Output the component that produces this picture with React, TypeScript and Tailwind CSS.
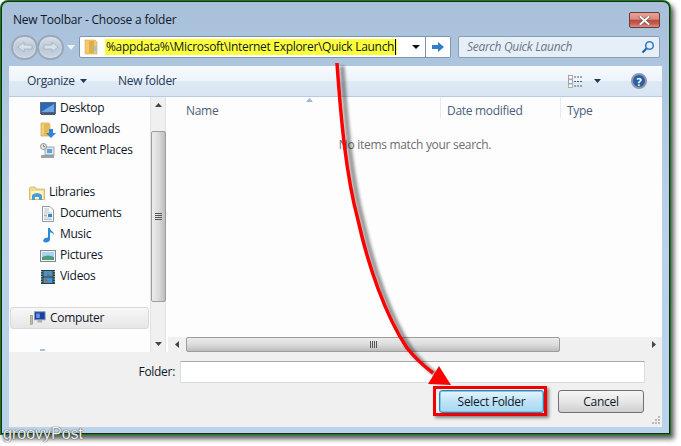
import React from "react";

const F = { fontFamily: '"Open Sans","Noto Sans",sans-serif' };

function NavIcon({ kind }: { kind: string }) {
  const c = "w-[16px] h-[16px] shrink-0";
  switch (kind) {
    case "desktop":
      return (
        <svg className={c} viewBox="0 0 16 16">
          <rect x="0.5" y="1.5" width="15" height="11" fill="#2d66b8" stroke="#5b6b80" />
          <path d="M1 11L14 3V11Z" fill="#6fa5e0" />
          <rect x="1" y="12" width="14" height="2" fill="#555" />
          <rect x="2" y="12" width="2" height="1" fill="#d33" />
        </svg>
      );
    case "downloads":
      return (
        <svg className={c} viewBox="0 0 16 16">
          <path d="M1 1H9L10 3V14H1Z" fill="#f0cf78" stroke="#c9a24f" strokeWidth=".7" />
          <path d="M4 2H9V14H4Z" fill="#e4b94f" />
          <path d="M9 7H13V11H16L11 16L6 11H9Z" fill="#2f86d8" />
        </svg>
      );
    case "recent":
      return (
        <svg className={c} viewBox="0 0 16 16">
          <rect x="1" y="12" width="13" height="3" fill="#9aa3a8" />
          <rect x="5" y="4" width="9" height="8" fill="#dfe7ee" stroke="#8b949c" strokeWidth=".8" />
          <rect x="7" y="6" width="5" height="4" fill="#5ca2dc" />
          <circle cx="3.5" cy="3.5" r="3" fill="#e8e8e8" stroke="#777" strokeWidth=".8" />
          <path d="M3.5 1.8V3.6H5" stroke="#555" strokeWidth=".7" fill="none" />
        </svg>
      );
    case "libraries":
      return (
        <svg className={c} viewBox="0 0 16 16">
          <path d="M0.5 3V14.5H15.5V4H7L6 2H1.5Z" fill="#f3dc8f" stroke="#c9a95a" strokeWidth=".7" />
          <path d="M2 6H14V14H2Z" fill="#fdf3c8" />
          <path d="M3 15V10Q8 6 13 10V15H10V12H6V15Z" fill="#4a9ed8" />
        </svg>
      );
    case "documents":
      return (
        <svg className={c} viewBox="0 0 16 16">
          <path d="M2.5 .5H10L13.5 4V15.5H2.5Z" fill="#fbfdff" stroke="#8d99a6" />
          <path d="M4 3H9M4 5H9M4 7H12M4 12H12M4 13.5H12" stroke="#9aa5b0" strokeWidth=".7" />
          <rect x="8" y="8" width="4" height="3" fill="#3e86c6" />
          <rect x="4" y="8.5" width="3" height="2" fill="#a9b6c2" />
        </svg>
      );
    case "music":
      return (
        <svg className={c} viewBox="0 0 16 16">
          <path d="M8 1H10C10 4 14 4 14 8C13 6 11 5.500 10 5.500V12.500C10 15 6 16 4 15C2 13.500 4 10.500 8 10.500Z" fill="#2b8ad6" />
        </svg>
      );
    case "pictures":
      return (
        <svg className={c} viewBox="0 0 16 16">
          <rect x=".5" y="2.500" width="15" height="11" fill="#eef2f5" stroke="#7d8a94" />
          <rect x="2" y="4" width="12" height="8" fill="#a9d4ee" />
          <path d="M2 9Q8 6 14 9V12H2Z" fill="#4f9a7d" />
        </svg>
      );
    case "videos":
      return (
        <svg className={c} viewBox="0 0 16 16">
          <rect x="1" y="1" width="14" height="14" fill="#2b3f3c" />
          <rect x="3.500" y="2" width="9" height="5.500" fill="#3f96d8" />
          <rect x="3.500" y="8.500" width="9" height="5.500" fill="#3f96d8" />
          <path d="M1.800 2V14M14.200 2V14" stroke="#cfe3dc" strokeWidth="1" strokeDasharray="1.200 1.300" />
          <path d="M7 3L11 7H7ZM5 9L9 13H5Z" fill="#a8623d" />
        </svg>
      );
    default:
      return (
        <svg className={c} viewBox="0 0 18 16">
          <rect x="0" y="5" width="3" height="10" fill="#b9bd9a" stroke="#777" strokeWidth=".5" />
          <rect x="5" y="1" width="12" height="9" fill="#1740a8" stroke="#8d98a3" />
          <path d="M7 3H11V8H7Z" fill="#6b94e0" />
          <path d="M9 10H13L14 13H8Z" fill="#a8b0b8" />
        </svg>
      );
  }
}

function Row({ kind, label, indent = true }: { kind: string; label: string; indent?: boolean }) {
  return (
    <div className={`h-[21px] flex items-center text-[12px] text-[#101828] ${indent ? "pl-[31px]" : "pl-[20px]"}`}>
      <NavIcon kind={kind} />
      <span className="ml-[4px] pb-px">{label}</span>
    </div>
  );
}

function Grip({ vertical }: { vertical?: boolean }) {
  return vertical ? (
    <div className="flex flex-col gap-px w-[7px]">
      <div className="h-px bg-[#555]" />
      <div className="h-px bg-[#555]" />
      <div className="h-px bg-[#555]" />
      <div className="h-px bg-[#555]" />
    </div>
  ) : (
    <div className="flex gap-px h-[7px]">
      <div className="w-px bg-[#555]" />
      <div className="w-px bg-[#555]" />
      <div className="w-px bg-[#555]" />
      <div className="w-px bg-[#555]" />
    </div>
  );
}

function Tri({ d, color = "#333", w = 8, h = 5 }: { d: string; color?: string; w?: number; h?: number }) {
  const pts =
    d === "down"
      ? `0,0 ${w},0 ${w / 2},${h}`
      : d === "up"
      ? `0,${h} ${w},${h} ${w / 2},0`
      : d === "left"
      ? `${w},0 ${w},${h} 0,${h / 2}`
      : `0,0 0,${h} ${w},${h / 2}`;
  return (
    <svg width={w} height={h} className="block shrink-0">
      <polygon points={pts} fill={color} />
    </svg>
  );
}

function RoundNav({ flip }: { flip?: boolean }) {
  return (
    <div className="w-[27px] h-[25px] rounded-full border-2 border-[#9aa8b8] bg-gradient-to-b from-[#d5dde7] via-[#bcc9d8] to-[#c9d4e1] flex items-center justify-center shadow-[inset_0_0_2px_#eef3f8]">
      <svg width="16" height="12" viewBox="0 0 16 12" className={flip ? "rotate-180" : ""}>
        <path d="M1 6L7 1V4H15V8H7V11Z" fill="#d8e0e9" stroke="#a3afbd" strokeWidth=".8" />
      </svg>
    </div>
  );
}

export default function App() {
  return (
    <div className="relative w-[681px] h-[446px] bg-white overflow-hidden tracking-[-0.3px]" style={F}>
      {/* window */}
      <div className="w-[671px] h-[435px] bg-[#0f7f16] rounded-t-[8px] p-px shadow-[3px_4px_5px_rgba(0,0,0,0.65)]">
        <div className="w-full h-full bg-[#1c2b1c] rounded-t-[7px] p-px">
          <div className="w-full h-full rounded-t-[6px] bg-gradient-to-b from-[#a9c0da] via-[#b9d0e8] to-[#bad3ec] px-[7px] pb-[6px] flex flex-col">
            {/* title bar */}
            <div className="h-[28px] flex items-end shrink-0 relative">
              <span className="text-[12px] leading-[16px] text-[#101828] ml-[4px] mb-[2px] tracking-[-0.2px]">New Toolbar - Choose a folder</span>
              <div className="ml-auto mr-[2px] mb-[2px] w-[31px] h-[16px] rounded-[2px] border border-[#6b3a3a] bg-[linear-gradient(#e6a396,#d98b7e_45%,#b8483d_50%,#c55c50_75%,#dd9085)] flex items-center justify-center">
                <svg width="13" height="9" viewBox="0 0 13 9">
                  <path d="M2.500 1L10.500 8M10.500 1L2.500 8" stroke="#6b4a48" strokeWidth="3" strokeLinecap="square" />
                  <path d="M2.500 1L10.500 8M10.500 1L2.500 8" stroke="#fff" strokeWidth="2" strokeLinecap="square" />
                </svg>
              </div>
            </div>
            {/* nav row */}
            <div className="h-[34px] flex items-center shrink-0">
              <div className="flex -space-x-[1px] ml-[2px]">
                <RoundNav />
                <RoundNav flip />
              </div>
              <div className="ml-[3px]">
                <Tri d="down" color="#eef3f8" w={8} h={5} />
              </div>
              <div className="ml-[4px] w-[372px] h-[22px] bg-white border border-[#7d95ae] rounded-[2px] flex items-center shrink-0">
                <svg width="14" height="16" viewBox="0 0 14 16" className="ml-[4px] shrink-0">
                  <path d="M1 1H11L13 3V15H1Z" fill="#efcb6d" stroke="#d2ad56" strokeWidth=".6" />
                  <path d="M5 2H10V14H5Z" fill="#dfb04a" />
                  <rect x="10" y="7" width="3" height="5" fill="#9cc5e8" />
                </svg>
                <div className="ml-[7px] bg-[#ffff3c] h-[16px] flex items-center text-[12px] leading-[16px] text-[#101828] whitespace-nowrap w-[292px] shrink-0 pl-px">
                  <span className="border-r border-black pr-px">%appdata%\Microsoft\Internet Explorer\Quick Launch</span>
                </div>
                <div className="ml-auto mr-[5px]">
                  <Tri d="down" color="#111" w={8} h={4} />
                </div>
                <div className="w-[25px] h-full bg-white border-l border-[#7d95ae] flex items-center justify-center shrink-0">
                  <svg width="14" height="12" viewBox="0 0 14 12">
                    <path d="M1 4H7V1L13 6L7 11V8H1Z" fill="#2f7fc8" />
                  </svg>
                </div>
              </div>
              <div className="ml-[7px] flex-1 mr-[2px] h-[22px] bg-[#e6eff8] border border-[#8d9db0] rounded-[2px] flex items-center pl-[8px] pr-[4px]">
                <span className="text-[12px] italic text-[#6d7681]">Search Quick Launch</span>
                <svg width="14" height="14" viewBox="0 0 14 14" className="ml-auto">
                  <circle cx="8.500" cy="5.500" r="3.800" fill="none" stroke="#2f7fc8" strokeWidth="1.600" />
                  <path d="M5.500 8.500L1.500 12.500" stroke="#1d5f9f" strokeWidth="2" />
                </svg>
              </div>
            </div>
            {/* client */}
            <div className="flex-1 flex flex-col min-h-0 mt-[2px]">
              {/* toolbar */}
              <div className="h-[31px] shrink-0 border-b border-[#b9cbe0] bg-[linear-gradient(#f7fbfe,#edf3fa_50%,#dfe9f5_50%,#d9e5f3)] flex items-center text-[12px] text-[#1e395b]">
                <span className="ml-[18px] w-[53px] pb-px">Organize</span>
                <Tri d="down" color="#1e395b" w={7} h={4} />
                <span className="ml-[31px] pb-px">New folder</span>
                <svg width="15" height="13" viewBox="0 0 15 13" className="ml-auto">
                  <path d="M6 2H14M6 6.500H14M6 11H14" stroke="#46607e" strokeWidth="1" strokeDasharray="2 1" />
                  <rect x=".5" y=".5" width="4" height="3.500" fill="#fff" stroke="#a88" strokeWidth=".8" />
                  <rect x=".5" y="4.800" width="4" height="3.500" fill="#fff" stroke="#88a" strokeWidth=".8" />
                  <rect x=".5" y="9" width="4" height="3.500" fill="#fff" stroke="#8a8" strokeWidth=".8" />
                </svg>
                <span className="ml-[11px]"><Tri d="down" color="#1e395b" w={7} h={4} /></span>
                <div className="ml-[30px] mr-[15px] w-[16px] h-[16px] rounded-full bg-[#2c5ea6] border-2 border-[#8d99a8] flex items-center justify-center text-white text-[11px] font-bold leading-none">?</div>
              </div>
              {/* main */}
              <div className="h-[255px] shrink-0 flex bg-[#fdfdfd]">
                {/* sidebar */}
                <div className="w-[141px] shrink-0 overflow-hidden pt-px">
                  <Row kind="desktop" label="Desktop" />
                  <Row kind="downloads" label="Downloads" />
                  <Row kind="recent" label="Recent Places" />
                  <div className="h-[21px]" />
                  <Row kind="libraries" label="Libraries" indent={false} />
                  <Row kind="documents" label="Documents" />
                  <Row kind="music" label="Music" />
                  <Row kind="pictures" label="Pictures" />
                  <Row kind="videos" label="Videos" />
                  <div className="h-[20px]" />
                  <div className="h-[22px] ml-px mr-px pl-[19px] flex items-center text-[12px] text-[#101828] border border-[#d9d9d9] rounded-[3px] bg-gradient-to-b from-[#f8f8f8] to-[#e6e6e6]">
                    <NavIcon kind="computer" />
                    <span className="ml-[4px] pb-px">Computer</span>
                  </div>
                  <div className="ml-[31px] mt-[20px] w-[5px] h-[2px] bg-[#a8c0dc]" />
                </div>
                {/* sidebar scrollbar */}
                <div className="w-[16px] shrink-0 flex flex-col items-center bg-[#f0f0f0] border-x border-[#e2e2e2]">
                  <div className="h-[10px] flex items-end shrink-0"><Tri d="up" color="#444" w={7} h={4} /></div>
                  <div className="h-[24px] shrink-0" />
                  <div className="w-[15px] h-[171px] shrink-0 rounded-[2px] border border-[#9c9c9c] bg-gradient-to-r from-[#ececec] via-[#dcdcdc] to-[#bdbdbd] flex items-center justify-center">
                    <Grip vertical />
                  </div>
                  <div className="mt-auto mb-[6px]"><Tri d="down" color="#444" w={7} h={4} /></div>
                </div>
                <div className="w-[2px] shrink-0 bg-white" />
                {/* list */}
                <div className="flex-1 flex flex-col min-w-0">
                  <div className="h-[21px] shrink-0 flex text-[12px] text-[#4c607a]">
                    <div className="w-[273px] border-r border-[#e3ecf5] pl-[18px] pt-[5px] relative">
                      Name
                      <div className="absolute left-[138px] top-[1px]"><Tri d="up" color="#9db8d6" w={7} h={4} /></div>
                    </div>
                    <div className="w-[120px] border-r border-[#e3ecf5] pl-[6px] pt-[5px]">Date modified</div>
                    <div className="pl-[6px] pt-[5px]">Type</div>
                  </div>
                  <div className="flex-1 text-center text-[12px] text-[#6d6d6d] pt-[18px]">No items match your search.</div>
                  <div className="h-[15px] shrink-0 flex items-center bg-[#f0f0f0]">
                    <div className="w-[18px] flex justify-center"><Tri d="left" color="#444" w={4} h={7} /></div>
                    <div className="w-[374px] h-[15px] rounded-[2px] border border-[#9c9c9c] bg-gradient-to-b from-[#ececec] via-[#dcdcdc] to-[#bdbdbd] flex items-center justify-center">
                      <Grip />
                    </div>
                    <div className="ml-auto mr-[6px]"><Tri d="right" color="#444" w={4} h={7} /></div>
                  </div>
                </div>
              </div>
              {/* footer */}
              <div className="flex-1 bg-[#f0f0f0] flex flex-col min-h-0 relative">
                <div className="flex items-center mt-[9px] h-[22px]">
                  <span className="w-[166px] text-right text-[12px] text-[#101828] pb-px">Folder:</span>
                  <div className="ml-[5px] w-[465px] h-[22px] bg-white border border-[#d8dde3] border-t-[#a8a8a8] rounded-[1px]" />
                </div>
                <div className="flex mt-[7px]">
                  <div className="ml-[430px] w-[105px] h-[23px] rounded-[3px] border border-[#3c7fb1] bg-gradient-to-b from-[#e5f4fc] via-[#bfe3f6] to-[#a7d8f2] shadow-[inset_0_0_0_1px_#6ecde8] flex items-center justify-center text-[12px] text-[#101828]">Select Folder</div>
                  <div className="ml-[14px] w-[86px] h-[23px] rounded-[3px] border border-[#707070] bg-gradient-to-b from-[#f6f6f6] via-[#e6e6e6] to-[#cfcfcf] flex items-center justify-center text-[12px] text-[#101828]">Cancel</div>
                </div>
                <div className="absolute right-[2px] bottom-[2px]">
                  <svg width="10" height="10" className="block">
                    <path d="M8 1h2v2H8zM5 4h2v2H5zM8 4h2v2H8zM2 7h2v2H2zM5 7h2v2H5zM8 7h2v2H8z" fill="#b9b9b9" />
                  </svg>
                </div>
              </div>
            </div>
          </div>
        </div>
      </div>

      {/* annotation overlays */}
      <div className="absolute left-[433px] top-[386px] w-[114px] h-[30px] border-[3px] border-[#f00000] shadow-[2px_2px_3px_rgba(0,0,0,0.45)]" />
      <svg className="absolute left-0 top-0 pointer-events-none" width="681" height="446">
        <path className="blur-[1.5px]" d="M337 63C341 120 346 175 358 220C368 265 385 315 407 348C415 358 425 367 433 373" fill="none" stroke="rgba(0,0,0,0.4)" strokeWidth="5" transform="translate(5,3)" />
        <path d="M337 63C341 120 346 175 358 220C368 265 385 315 407 348C415 358 425 367 433 373" fill="none" stroke="#ff0000" strokeWidth="3.500" />
        <polygon points="439,366 428,384 451,385" fill="#ff0000" />
      </svg>
      <div className="absolute left-[3px] top-[424px] text-[16px] leading-[20px] tracking-normal text-[#eeeeee] [text-shadow:0_0_1px_#333,0_0_1px_#555]" style={{ fontFamily: '"Liberation Sans",sans-serif' }}>
        groovyPost
      </div>
    </div>
  );
}
